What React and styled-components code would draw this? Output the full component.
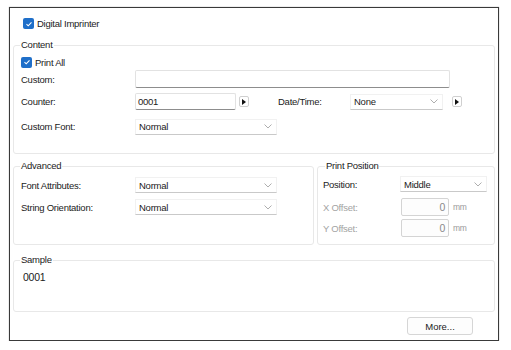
import styled, { createGlobalStyle } from "styled-components";

const GlobalStyle = createGlobalStyle`
  body {
    margin: 0;
    background: #ffffff;
    font-family: "Liberation Sans", Arial, sans-serif;
    font-size: 9.5px;
    letter-spacing: -0.25px;
    color: #1b1b1b;
  }
`;

const Frame = styled.div`
  margin: 7px 0 0 9px;
  width: 490px;
  height: 334px;
  box-sizing: border-box;
  border: 1px solid #3a3a3a;
  box-shadow: 0 0 1px rgba(0, 0, 0, 0.4);
  padding: 0 3px;
  display: flex;
  flex-direction: column;
`;

const Header = styled.div`
  height: 37px;
  display: flex;
  align-items: center;
  padding: 0 0 6px 10px;
  box-sizing: border-box;
`;

const CheckRow = styled.label`
  display: flex;
  align-items: center;
  gap: 3px;
  height: ${(p) => p.$h || 14}px;
  margin-top: ${(p) => p.$mt || 0}px;
`;

const Box = styled.span`
  width: 11px;
  height: 11px;
  border-radius: 2px;
  background: #1f6fc9;
  display: flex;
  align-items: center;
  justify-content: center;
`;

const Group = styled.div`
  position: relative;
  box-sizing: border-box;
  height: ${(p) => p.$h}px;
  width: ${(p) => (p.$w ? `${p.$w}px` : "auto")};
  margin-top: ${(p) => p.$mt || 0}px;
  border: 1px solid #e8e8e8;
  border-radius: 3px;
  padding: 0 7px 0 ${(p) => p.$pl ?? 7}px;
  display: flex;
  flex-direction: column;
`;

const Legend = styled.span`
  position: absolute;
  top: -7px;
  left: ${(p) => p.$x || 6}px;
  padding: 0 1px;
  background: #ffffff;
  line-height: 12px;
`;

const Middle = styled.div`
  display: flex;
  gap: 3px;
  margin-top: 12px;
`;

const Row = styled.div`
  display: flex;
  align-items: center;
  height: ${(p) => p.$h || 17}px;
  margin-top: ${(p) => p.$mt || 0}px;
`;

const Label = styled.span`
  width: ${(p) => p.$w || 114}px;
  margin-left: ${(p) => p.$ml || 0}px;
  flex-shrink: 0;
  color: ${(p) => (p.$disabled ? "#a3a3a3" : "#1b1b1b")};
  white-space: nowrap;
`;

const Field = styled.div`
  box-sizing: border-box;
  width: ${(p) => p.$w}px;
  height: ${(p) => p.$h || 18}px;
  margin-left: ${(p) => p.$ml || 0}px;
  border: 1px solid #e2e2e2;
  border-bottom-color: #8d8d8d;
  border-radius: 2px;
  padding: 0 2px;
  display: flex;
  align-items: center;
  justify-content: ${(p) => (p.$right ? "flex-end" : "flex-start")};
  background: #ffffff;
`;

const OffsetField = styled(Field)`
  border-color: #d4d4d4;
  background: #fdfdfd;
  color: #8a8a8a;
  padding-right: 3px;
  font-size: 10.5px;
`;

const Select = styled.div`
  box-sizing: border-box;
  width: ${(p) => p.$w}px;
  height: 16px;
  border: 1px solid #f1f1f1;
  border-bottom-color: #c9c9c9;
  padding: 0 4px 0 3px;
  display: flex;
  align-items: center;
  justify-content: space-between;
`;

const ArrowBtn = styled.span`
  box-sizing: border-box;
  width: 10px;
  height: 11px;
  margin-left: ${(p) => p.$ml || 3}px;
  border: 1px solid #d0d0d0;
  border-radius: 2px;
  display: flex;
  align-items: center;
  justify-content: center;
`;

const Unit = styled.span`
  margin-left: 4px;
  color: #9a9a9a;
  font-size: 8.5px;
`;

const SampleText = styled.div`
  margin: 9px 0 0 2px;
  font-size: 10.5px;
  line-height: 14px;
`;

const Footer = styled.div`
  display: flex;
  justify-content: flex-end;
  margin-top: 5px;
  padding-right: 22px;
`;

const Button = styled.button`
  box-sizing: border-box;
  width: 66px;
  height: 18px;
  border: 1px solid #d6d6d6;
  border-radius: 3px;
  background: #fdfdfd;
  font: inherit;
  color: #1b1b1b;
  padding: 0;
`;

const Check = () => (
  <Box>
    <svg width="8" height="8" viewBox="0 0 8 8">
      <path d="M1.5 4.2 L3.2 5.8 L6.5 2.3" fill="none" stroke="#fff" strokeWidth="1.1" />
    </svg>
  </Box>
);

const Chevron = () => (
  <svg width="8" height="5" viewBox="0 0 8 5">
    <path d="M0.5 0.5 L4 4 L7.5 0.5" fill="none" stroke="#999" strokeWidth="0.8" />
  </svg>
);

const Tri = () => (
  <svg width="4" height="6" viewBox="0 0 4 6">
    <path d="M0 0 L4 3 L0 6 Z" fill="#111" />
  </svg>
);

const Combo = ({ w, value }) => (
  <Select $w={w}>
    <span>{value}</span>
    <Chevron />
  </Select>
);

export default function App() {
  return (
    <>
      <GlobalStyle />
      <Frame>
        <Header>
          <CheckRow>
            <Check />
            Digital Imprinter
          </CheckRow>
        </Header>

        <Group $h={109}>
          <Legend>Content</Legend>
          <CheckRow $mt={9}>
            <Check />
            Print All
          </CheckRow>
          <Row $h={18} $mt={1}>
            <Label>Custom:</Label>
            <Field $w={315} />
          </Row>
          <Row $mt={5}>
            <Label>Counter:</Label>
            <Field $w={101} $h={17}>
              0001
            </Field>
            <ArrowBtn>
              <Tri />
            </ArrowBtn>
            <Label $w={72} $ml={29}>
              Date/Time:
            </Label>
            <Combo w={93} value="None" />
            <ArrowBtn $ml={9}>
              <Tri />
            </ArrowBtn>
          </Row>
          <Row $mt={8}>
            <Label>Custom Font:</Label>
            <Combo w={142} value="Normal" />
          </Row>
        </Group>

        <Middle>
          <Group $h={79} $w={301}>
            <Legend>Advanced</Legend>
            <Row $h={16} $mt={10}>
              <Label>Font Attributes:</Label>
              <Combo w={142} value="Normal" />
            </Row>
            <Row $h={16} $mt={6}>
              <Label>String Orientation:</Label>
              <Combo w={142} value="Normal" />
            </Row>
          </Group>
          <Group $h={79} $w={178} $pl={5}>
            <Legend $x={7}>Print Position</Legend>
            <Row $h={16} $mt={9}>
              <Label $w={77}>Position:</Label>
              <Combo w={90} value="Middle" />
            </Row>
            <Row $h={18} $mt={6}>
              <Label $w={77} $disabled>
                X Offset:
              </Label>
              <OffsetField $w={48} $ml={1} $right>
                0
              </OffsetField>
              <Unit>mm</Unit>
            </Row>
            <Row $h={18} $mt={3}>
              <Label $w={77} $disabled>
                Y Offset:
              </Label>
              <OffsetField $w={48} $ml={1} $right>
                0
              </OffsetField>
              <Unit>mm</Unit>
            </Row>
          </Group>
        </Middle>

        <Group $h={52} $mt={15}>
          <Legend>Sample</Legend>
          <SampleText>0001</SampleText>
        </Group>

        <Footer>
          <Button>More...</Button>
        </Footer>
      </Frame>
    </>
  );
}
